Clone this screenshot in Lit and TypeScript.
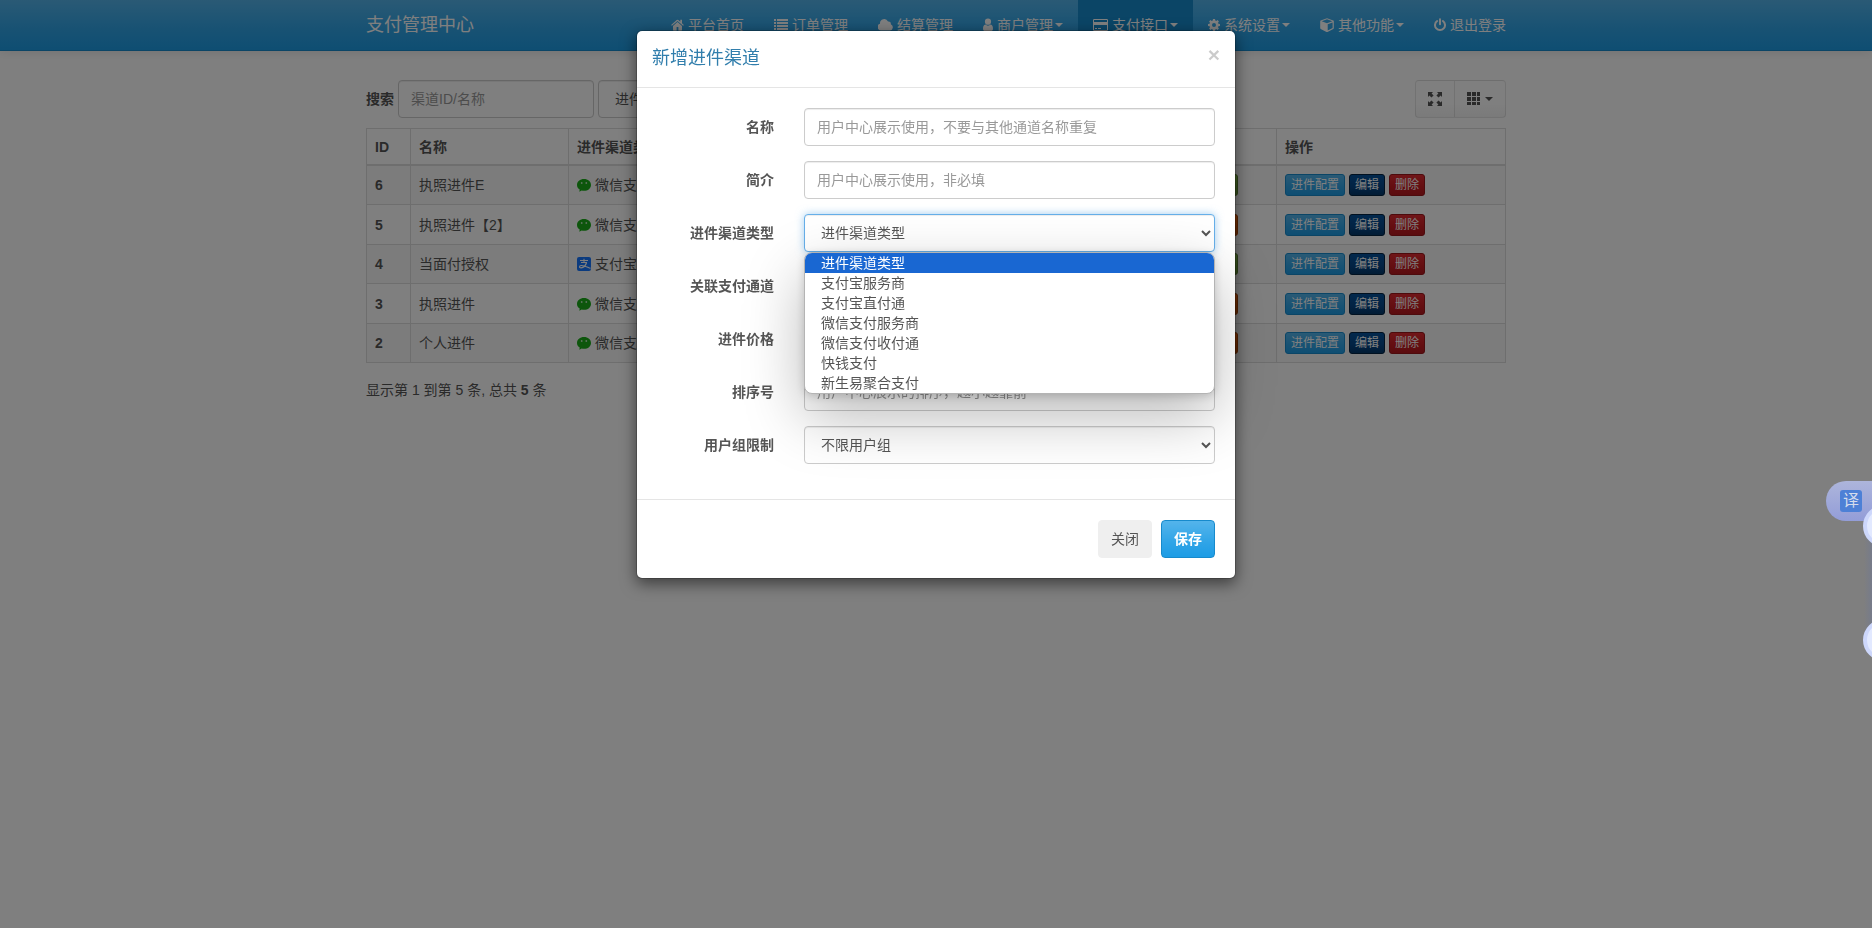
import { LitElement, html, css, svg } from "lit";
import { customElement } from "lit/decorators.js";
import { classMap } from "lit/directives/class-map.js";

const glyph = (w: number, body: unknown) => html`<svg class="icon" width=${w} height="14" viewBox="0 0 ${w} 14" aria-hidden="true">${body}</svg>`;

const icons = {
  home: glyph(13, svg`<path d="M6.5 4.1 2 7.900V12q0 .8.700.8h2.900V9h1.800v3.800h2.900q.7 0 .7-.8V7.900z"/><path d="M12.900 6.900 11 5.300V1.800H9.300v2L7.300 2a1.200 1.200 0 0 0-1.600 0L.1 6.900l.8.900 5.600-4.800 5.600 4.800z"/>`),
  list: glyph(14, svg`<path d="M0 1h2v2H0zM3 1h11v2H3zM0 4h2v2H0zM3 4h11v2H3zM0 7h2v2H0zM3 7h11v2H3zM0 10h2v2H0zM3 10h11v2H3z"/>`),
  cloud: glyph(15, svg`<path d="M3.500 12.500A3.500 3.500 0 0 1 2 5.700 4.200 4.200 0 0 1 10 3.600a2.200 2.200 0 0 1 2.800 2.600A3.300 3.300 0 0 1 12 12.500z"/>`),
  user: glyph(10, svg`<path d="M5 .6a3.100 3.100 0 1 1 0 6.200A3.100 3.100 0 0 1 5 .6zM2.400 6.600A3.700 3.700 0 0 0 5 7.700a3.700 3.700 0 0 0 2.600-1.100C9.400 7 10 8.900 10 10.700 10 12.200 9.200 13 8 13H2c-1.200 0-2-.8-2-2.300C0 8.900.6 7 2.400 6.600z"/>`),
  card: glyph(15, svg`<path fill-rule="evenodd" d="M1.300 1h12.400q1.300 0 1.300 1.300v9.400q0 1.300-1.300 1.300H1.300Q0 13 0 11.700V2.300Q0 1 1.300 1zM1 2v2h13V2zM1 7v5h13V7zM2 10h2v1H2zM5 10h3v1H5z"/>`),
  cog: glyph(12, svg`<path fill-rule="evenodd" d="M5 1h2l.3 1.600 1 .4 1.300-.9 1.300 1.400-.9 1.200.4 1L12 6v2l-1.600.3-.4 1 .9 1.300-1.400 1.300-1.200-.9-1 .4L7 13H5l-.3-1.600-1-.4-1.300.9-1.300-1.400.9-1.200-.4-1L0 8V6l1.600-.3.4-1-.9-1.300 1.400-1.300 1.200.9 1-.4zM6 5a2 2 0 1 0 0 4 2 2 0 0 0 0-4z"/>`),
  cube: glyph(14, svg`<path fill-rule="evenodd" d="M7 .2 13.300 2.500q.5.200.5.800V10q0 .6-.5.9l-5.800 3q-.5.200-1 0L.7 10.900q-.5-.3-.5-.9V3.300Q.2 2.700.7 2.500zM7 1.300 1.700 3.300 7 5.200l5.300-1.900zM7.700 12.600l4.900-2.600V4.500L7.700 6.300z"/>`),
  power: glyph(12, svg`<g fill="none" stroke="currentColor" stroke-width="2" stroke-linecap="round"><path d="M6 1.300v5"/><path d="M3.100 3A5 5 0 1 0 8.900 3"/></g>`),
  expand: glyph(14, svg`<path d="M0 0h5L3.600 1.400l2 2-2.200 2.200-2-2L0 5zM14 0v5l-1.400-1.400-2 2-2.200-2.200 2-2L9 0zM0 14V9l1.400 1.400 2-2 2.200 2.200-2 2L5 14zM14 14H9l1.400-1.400-2-2 2.200-2.200 2 2L14 9z"/>`),
  grid: glyph(14, svg`<path d="M0 0h4v4H0zM5 0h4v4H5zM10 0h3v4h-3zM0 5h4v4H0zM5 5h4v4H5zM10 5h3v4h-3zM0 10h4v3H0zM5 10h4v3H5zM10 10h3v3h-3z"/>`),
  wechat: svg`<path fill="#1aad19" d="M7 1c4 0 7 2.600 7 5.900s-3 5.900-7 5.900c-.8 0-1.600-.1-2.300-.3L2.300 13.700l.4-2.100C1.100 10.500 0 8.800 0 6.900 0 3.600 3 1 7 1z"/><circle cx="4.700" cy="5" r=".9" fill="#fff" opacity=".7"/><circle cx="9.300" cy="5" r=".9" fill="#fff" opacity=".7"/>`,
  alipay: svg`<rect width="14" height="14" rx="2" fill="#1677ff"/><g fill="none" stroke="#fff"><path stroke-width="1" d="M3 3.500h8M7 1.800v3.700M4 5.500h6"/><path stroke-width="1.200" d="M9.600 5.500C8.700 8.300 6.600 10.700 4 10.900 2 10.900 2 8.700 4.200 8.500 7 8.200 10 10 13.600 11.300"/></g>`,
};

interface NavItem { text: string; icon: unknown; menu?: boolean; active?: boolean }
interface Channel { id: number; name: string; kind: "wechat" | "alipay"; type: string; open: boolean }

const NAV: NavItem[] = [
  { text: "平台首页", icon: icons.home },
  { text: "订单管理", icon: icons.list },
  { text: "结算管理", icon: icons.cloud },
  { text: "商户管理", icon: icons.user, menu: true },
  { text: "支付接口", icon: icons.card, menu: true, active: true },
  { text: "系统设置", icon: icons.cog, menu: true },
  { text: "其他功能", icon: icons.cube, menu: true },
  { text: "退出登录", icon: icons.power },
];

const CHANNELS: Channel[] = [
  { id: 6, name: "执照进件E", kind: "wechat", type: "微信支付", open: true },
  { id: 5, name: "执照进件【2】", kind: "wechat", type: "微信支付", open: false },
  { id: 4, name: "当面付授权", kind: "alipay", type: "支付宝", open: true },
  { id: 3, name: "执照进件", kind: "wechat", type: "微信支付", open: false },
  { id: 2, name: "个人进件", kind: "wechat", type: "微信支付", open: false },
];

const TYPES = ["进件渠道类型", "支付宝服务商", "支付宝直付通", "微信支付服务商", "微信支付收付通", "快钱支付", "新生易聚合支付"];

@customElement("app-root")
export class AppRoot extends LitElement {
  static styles = css`
    :host {
      display: block;
      min-height: 100vh;
      background: #fff;
      color: #555;
      font: 14px/20px "Liberation Sans", "Noto Sans CJK SC", sans-serif;
    }
    *, *::before, *::after { box-sizing: border-box; }
    button, input, select { font: inherit; color: inherit; margin: 0; }
    a { color: inherit; text-decoration: none; }
    .icon { fill: currentColor; flex: none; }
    .container { width: 1140px; max-width: calc(100% - 30px); margin: 0 auto; }
    .caret {
      display: inline-block;
      border: 4px solid transparent;
      border-top-color: currentColor;
      border-bottom: 0;
      margin-left: 2px;
    }

    .navbar {
      background: linear-gradient(#54b4eb, #2fa4e7 60%, #1d9ce5);
      border-bottom: 1px solid #178acc;
      box-shadow: 0 1px 10px rgba(0, 0, 0, 0.1);
      color: #fff;
    }
    .navbar .container { display: flex; justify-content: space-between; }
    .brand { font-size: 18px; padding: 15px 0; }
    .nav { display: flex; list-style: none; margin: 0 -15px 0 0; padding: 0; }
    .nav-link { display: flex; align-items: center; padding: 15px; }
    .nav-link .icon { margin-right: 4px; }
    .nav-link.active { background: #178acc; }

    .toolbar { display: flex; align-items: center; padding: 29px 0 10px; gap: 4px; }
    .toolbar label { font-weight: 700; }
    .tools { display: flex; margin-left: auto; }
    .tool {
      display: flex;
      align-items: center;
      height: 38px;
      padding: 0 12px;
      border: 1px solid rgba(0, 0, 0, 0.1);
      border-radius: 4px 0 0 4px;
      background: linear-gradient(#fff, #fff 60%, #f5f5f5);
    }
    .tool + .tool { border-radius: 0 4px 4px 0; margin-left: -1px; }
    .tool .caret { margin-left: 4px; }

    .control {
      display: block;
      width: 100%;
      height: 38px;
      padding: 8px 12px;
      border: 1px solid #ccc;
      border-radius: 4px;
      background: #fff;
      box-shadow: inset 0 1px 1px rgba(0, 0, 0, 0.075);
      outline: 0;
    }
    .control::placeholder { color: #999; opacity: 1; }
    .control.open { border-color: #66afe9; box-shadow: inset 0 1px 1px rgba(0, 0, 0, 0.075), 0 0 8px rgba(102, 175, 233, 0.6); }
    .toolbar .control { width: 196px; }

    .table { width: 100%; border-collapse: collapse; table-layout: fixed; }
    .table th, .table td { border: 1px solid #ddd; padding: 8px; text-align: left; }
    .table thead th { border-bottom-width: 2px; padding-bottom: 7px; }
    .table tbody tr:nth-child(odd) { background: #f9f9f9; }
    .table tbody tr:nth-child(even) { height: 40px; }
    .col-id { width: 44px; }
    .col-name { width: 158px; }
    .col-action { width: 229px; }
    .type, .actions { display: flex; align-items: center; gap: 4px; }
    .state { display: flex; justify-content: flex-end; padding-right: 30px; }
    .btn-xs {
      height: 22px;
      padding: 1px 5px;
      border: 1px solid;
      border-radius: 3px;
      color: #fff;
      font-size: 12px;
      line-height: 18px;
    }
    .info { background: linear-gradient(#54b4eb, #2fa4e7 60%, #1d9ce5); border-color: #178acc; }
    .edit { background: linear-gradient(#04519b, #044687 60%, #033769); border-color: #022241; }
    .danger { background: linear-gradient(#e12b31, #c71c22 60%, #b5191f); border-color: #9a161a; }
    .success { background: linear-gradient(#88c149, #73a839 60%, #699934); border-color: #59822c; }
    .warning { background: linear-gradient(#ff6707, #dd5600 60%, #c94e00); border-color: #aa4200; }
    .summary { margin: 17px 0 0; }

    .backdrop { position: fixed; inset: 0; background: rgba(0, 0, 0, 0.5); }
    .modal {
      position: absolute;
      top: 30px;
      left: 0;
      right: 0;
      width: 600px;
      max-width: 100%;
      margin: 0 auto;
      background: #fff;
      background-clip: padding-box;
      border: 1px solid rgba(0, 0, 0, 0.2);
      border-radius: 6px;
      box-shadow: 0 5px 15px rgba(0, 0, 0, 0.5);
    }
    .modal-head {
      display: flex;
      justify-content: space-between;
      align-items: flex-start;
      padding: 14px 15px 16px;
      border-bottom: 1px solid #e5e5e5;
    }
    .modal-title { margin: 0; font-size: 18px; line-height: 26px; font-weight: 400; color: #317eac; }
    .close {
      border: 0;
      padding: 0;
      background: none;
      color: #000;
      opacity: 0.2;
      font-size: 21px;
      line-height: 20px;
      font-weight: 700;
    }
    .modal-body { padding: 20px; }
    .row { display: grid; grid-template-columns: 117px 1fr; gap: 30px; margin-bottom: 15px; }
    .row label { padding: 9px 0; text-align: right; font-weight: 700; }
    .field { position: relative; }
    .options {
      position: absolute;
      z-index: 2;
      top: 100%;
      left: 0;
      right: 0;
      margin: 0;
      padding: 0;
      list-style: none;
      overflow: hidden;
      border: 1px solid #b4b4b4;
      border-radius: 8px;
      background: #fff;
      box-shadow: 0 2px 8px rgba(0, 0, 0, 0.16), 0 22px 60px rgba(0, 0, 0, 0.28);
    }
    .option { padding: 0 16px; }
    .option.selected { background: #1967d2; color: #fff; }
    .modal-foot { display: flex; justify-content: flex-end; gap: 9px; padding: 20px; border-top: 1px solid #e5e5e5; }
    .btn { height: 38px; padding: 0 12px; border: 1px solid #efefef; border-radius: 4px; background: #efefef; }
    .btn.info { background: linear-gradient(#54b4eb, #2fa4e7 60%, #1d9ce5); border-color: #178acc; color: #fff; font-weight: 700; }

    .dock { position: fixed; right: 0; top: 481px; width: 46px; height: 180px; overflow: hidden; }
    .translate {
      width: 60px;
      height: 40px;
      padding: 9px 14px;
      border: 0;
      border-radius: 20px 0 0 20px;
      background: linear-gradient(#adb5db, #939dd8);
      text-align: left;
    }
    .translate-mark {
      display: block;
      width: 22px;
      height: 22px;
      border-radius: 3px;
      background: #4d80d6;
      color: #d5dcec;
      font-size: 16px;
      line-height: 22px;
      text-align: center;
    }
    .bubble {
      position: absolute;
      left: 37px;
      width: 42px;
      height: 42px;
      border-radius: 50%;
      border: 4px solid #cdd7fb;
      background: #e2e9ff;
    }
    .bubble.upper { top: 24px; }
    .bubble.lower { top: 138px; }
    .rail { position: absolute; right: 0; top: 50px; width: 8px; height: 100px; background: linear-gradient(90deg, rgba(110, 120, 150, 0), rgba(110, 120, 150, 0.5)); }
  `;

  private renderRow(c: Channel) {
    return html`<tr>
      <td><b>${c.id}</b></td>
      <td>${c.name}</td>
      <td><span class="type"><svg width="14" height="14" viewBox="0 0 14 14" aria-hidden="true">${icons[c.kind]}</svg>${c.type}</span></td>
      <td><div class="state"><button class=${classMap({ "btn-xs": true, success: c.open, warning: !c.open })}>${c.open ? "开启" : "关闭"}</button></div></td>
      <td><div class="actions">
        <button class="btn-xs info">进件配置</button><button class="btn-xs edit">编辑</button><button class="btn-xs danger">删除</button>
      </div></td>
    </tr>`;
  }

  private renderInput(id: string, label: string, placeholder: string) {
    return html`<div class="row">
      <label for=${id}>${label}</label>
      <div class="field"><input class="control" id=${id} placeholder=${placeholder} /></div>
    </div>`;
  }

  render() {
    return html`
      <header class="navbar">
        <div class="container">
          <a class="brand" href="#">支付管理中心</a>
          <ul class="nav">
            ${NAV.map((n) => html`<li><a href="#" class=${classMap({ "nav-link": true, active: !!n.active })}>${n.icon}${n.text}${n.menu ? html`<span class="caret"></span>` : ""}</a></li>`)}
          </ul>
        </div>
      </header>
      <main class="container">
        <div class="toolbar">
          <label for="search">搜索</label>
          <input class="control" id="search" placeholder="渠道ID/名称" />
          <select class="control" aria-label="进件渠道类型">${TYPES.map((t) => html`<option>${t}</option>`)}</select>
          <div class="tools">
            <button class="tool" aria-label="全屏">${icons.expand}</button>
            <button class="tool" aria-label="列">${icons.grid}<span class="caret"></span></button>
          </div>
        </div>
        <table class="table">
          <colgroup><col class="col-id" /><col class="col-name" /><col /><col /><col class="col-action" /></colgroup>
          <thead><tr><th>ID</th><th>名称</th><th>进件渠道类型</th><th></th><th>操作</th></tr></thead>
          <tbody>${CHANNELS.map((c) => this.renderRow(c))}</tbody>
        </table>
        <p class="summary">显示第 1 到第 5 条, 总共 <b>5</b> 条</p>
      </main>
      <div class="backdrop"></div>
      <div class="modal" role="dialog" aria-labelledby="modal-title">
        <div class="modal-head">
          <h4 class="modal-title" id="modal-title">新增进件渠道</h4>
          <button class="close" aria-label="关闭">×</button>
        </div>
        <form class="modal-body">
          ${this.renderInput("name", "名称", "用户中心展示使用，不要与其他通道名称重复")}
          ${this.renderInput("intro", "简介", "用户中心展示使用，非必填")}
          <div class="row">
            <label for="type">进件渠道类型</label>
            <div class="field">
              <select class="control open" id="type">${TYPES.map((t) => html`<option>${t}</option>`)}</select>
              <ul class="options" role="listbox">
                ${TYPES.map((t, i) => html`<li role="option" class=${classMap({ option: true, selected: i === 0 })}>${t}</li>`)}
              </ul>
            </div>
          </div>
          <div class="row">
            <label for="channel">关联支付通道</label>
            <div class="field"><select class="control" id="channel"></select></div>
          </div>
          ${this.renderInput("price", "进件价格", "")}
          ${this.renderInput("sort", "排序号", "用户中心展示的排序，越小越靠前")}
          <div class="row">
            <label for="group">用户组限制</label>
            <div class="field"><select class="control" id="group"><option>不限用户组</option></select></div>
          </div>
        </form>
        <div class="modal-foot">
          <button class="btn">关闭</button>
          <button class="btn info">保存</button>
        </div>
      </div>
      <aside class="dock">
        <button class="translate" aria-label="翻译"><span class="translate-mark">译</span></button>
        <span class="rail"></span>
        <span class="bubble upper"></span>
        <span class="bubble lower"></span>
      </aside>
    `;
  }
}
